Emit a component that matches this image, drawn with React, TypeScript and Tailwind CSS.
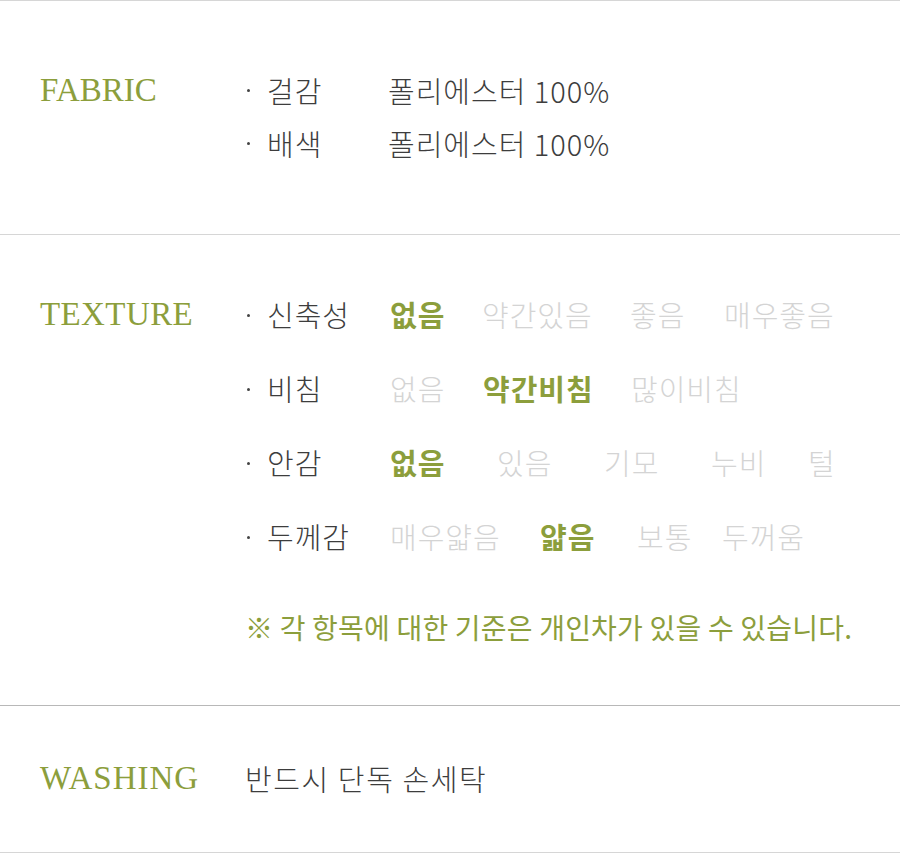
import React from 'react';

// Product detail spec table: fabric / texture / washing

const KR = "font-['Noto_Sans_CJK_KR',sans-serif]";

type Opt = { text: string; on?: boolean; w?: number };

const textureRows: { label: string; opts: Opt[] }[] = [
  {
    label: '신축성',
    opts: [
      { text: '없음', on: true, w: 92 },
      { text: '약간있음', w: 148 },
      { text: '좋음', w: 94 },
      { text: '매우좋음' },
    ],
  },
  {
    label: '비침',
    opts: [
      { text: '없음', w: 93 },
      { text: '약간비침', on: true, w: 148 },
      { text: '많이비침' },
    ],
  },
  {
    label: '안감',
    opts: [
      { text: '없음', on: true, w: 107 },
      { text: '있음', w: 107 },
      { text: '기모', w: 107 },
      { text: '누비', w: 97 },
      { text: '털' },
    ],
  },
  {
    label: '두께감',
    opts: [
      { text: '매우얇음', w: 150 },
      { text: '얇음', on: true, w: 97 },
      { text: '보통', w: 85 },
      { text: '두꺼움' },
    ],
  },
];

function Heading({ children, className = '' }: { children: React.ReactNode; className?: string }) {
  return (
    <div
      className={`w-[205px] shrink-0 font-['Liberation_Serif',serif] text-[33px] text-[#8c9e3c] ${className}`}
    >
      {children}
    </div>
  );
}

function Bullet() {
  return (
    <span className="flex w-[22px] shrink-0 items-center">
      <span className="ml-[2px] h-[3px] w-[3px] rounded-full bg-[#444]" />
    </span>
  );
}

export default function App() {
  return (
    <div className={`min-h-[857px] w-[900px] bg-white ${KR}`}>
      {/* Fabric */}
      <section className="flex border-t border-[#d6d6d6] pt-[63px] pb-[64px] pl-[40px]">
        <div className="flex h-[53px] items-center">
          <Heading>FABRIC</Heading>
        </div>
        <div className="flex flex-col text-[29px] font-light tracking-[1px] text-[#3d3d3d]">
          {['걸감', '배색'].map((label) => (
            <div key={label} className="flex h-[53px] items-center">
              <Bullet />
              <span className="w-[121px] shrink-0">{label}</span>
              <span>폴리에스터 100%</span>
            </div>
          ))}
        </div>
      </section>

      {/* Texture */}
      <section className="flex border-t border-[#d6d6d6] pb-[58px] pl-[40px] pt-[43px]">
        <div className="flex h-[74px] items-center">
          <Heading className="tracking-[0.4px]">TEXTURE</Heading>
        </div>
        <div className="flex flex-col">
          {textureRows.map((row) => (
            <div key={row.label} className="flex h-[74px] items-center text-[29px] font-light tracking-[1px]">
              <Bullet />
              <span className="w-[123px] shrink-0 text-[#3d3d3d]">{row.label}</span>
              {row.opts.map((o) => (
                <span
                  key={o.text}
                  className={
                    o.on
                      ? 'shrink-0 font-bold text-[#8c9e3c]'
                      : 'shrink-0 text-[#d4d4d4]'
                  }
                  style={o.w ? { width: o.w } : undefined}
                >
                  {o.text}
                </span>
              ))}
            </div>
          ))}
          <p className="mt-[33px] flex h-[40px] items-center text-[28px] tracking-[0.2px] text-[#8c9e3c]">
            ※ 각 항목에 대한 기준은 개인차가 있을 수 있습니다.
          </p>
        </div>
      </section>

      {/* Washing */}
      <section className="flex items-center border-y border-t-[#b8b8b8] border-b-[#d6d6d6] pb-[47px] pl-[40px] pt-[46px]">
        <div className="flex h-[53px] items-center">
          <Heading className="tracking-[1px]">WASHING</Heading>
        </div>
        <span className="text-[29px] font-light tracking-[1.6px] text-[#3d3d3d]">반드시 단독 손세탁</span>
      </section>
    </div>
  );
}
